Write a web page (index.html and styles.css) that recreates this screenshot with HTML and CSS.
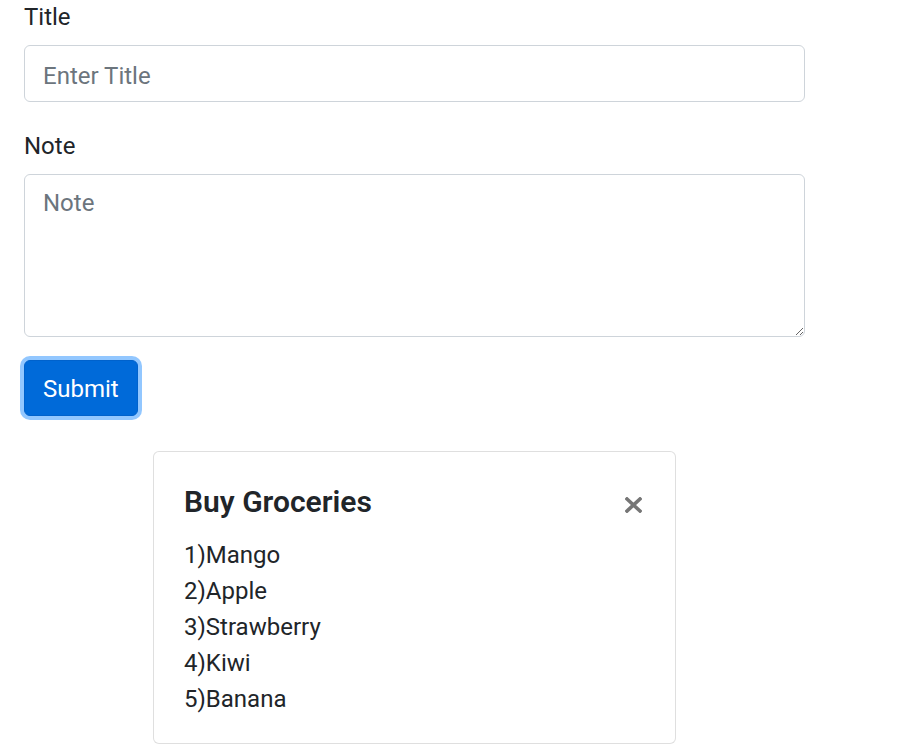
FILE: index.html
```html
<!DOCTYPE html>
<html lang="en">
<head>
<meta charset="utf-8">
<title>Notes</title>
<link rel="stylesheet" href="styles.css">
</head>
<body>
<div class="page">
  <form class="note-form">
    <div class="form-group">
      <label for="title">Title</label>
      <input id="title" class="form-control input" type="text" placeholder="Enter Title">
    </div>
    <div class="form-group form-group-note">
      <label for="note">Note</label>
      <textarea id="note" class="form-control textarea" placeholder="Note"></textarea>
    </div>
    <button type="button" class="btn btn-primary">Submit</button>
  </form>
  <div class="card">
    <div class="card-body">
      <div class="card-head">
        <h5 class="card-title">Buy Groceries</h5>
        <button type="button" class="close" aria-label="Close">
          <svg width="17" height="16" viewBox="0 0 17 16"><path d="M2 2 L15 14 M15 2 L2 14" stroke="#767676" stroke-width="3.6" stroke-linecap="square" fill="none"/></svg>
        </button>
      </div>
      <p class="card-text">1)Mango<br>2)Apple<br>3)Strawberry<br>4)Kiwi<br>5)Banana</p>
    </div>
  </div>
</div>
</body>
</html>
```

FILE: styles.css
```css
html, body {
  margin: 0;
  padding: 0;
  background: #fff;
}

body {
  font-family: "Segoe UI", Roboto, "Liberation Sans", sans-serif;
  font-size: 24px;
  line-height: 1.5;
  color: #212529;
}

.page {
  width: 781px;
  padding: 0 24px;
}

.note-form {
  margin-top: -3px;
}

.form-group {
  margin-bottom: 24px;
}

.form-group-note {
  margin-bottom: 23px;
}

label {
  display: block;
  line-height: 36px;
  padding-top: 2px;
  margin-bottom: 10px;
}

.form-control {
  display: block;
  width: 100%;
  box-sizing: border-box;
  padding: 11px 18px 7px;
  font-family: inherit;
  font-size: 24px;
  line-height: 36px;
  color: #495057;
  background: #fff;
  border: 1px solid #ced4da;
  border-radius: 6px;
  outline: none;
  margin: 0;
}

.form-control::placeholder {
  color: #6c757d;
  opacity: 1;
}

.input {
  height: 57px;
}

.textarea {
  height: 163px;
  resize: vertical;
  padding-top: 10px;
}

.btn {
  display: inline-block;
  font-family: inherit;
  font-size: 24px;
  line-height: 36px;
  padding: 10px 18px 8px;
  border-radius: 6px;
  cursor: pointer;
}

.btn-primary {
  color: #fff;
  background: #006ad9;
  border: 1px solid #0062cc;
  box-shadow: 0 0 0 4px rgba(38, 143, 255, 0.5);
}

.card {
  width: 523px;
  box-sizing: border-box;
  margin: 35px auto 0;
  border: 1px solid rgba(0, 0, 0, 0.125);
  border-radius: 6px;
  background: #fff;
}

.card-body {
  padding: 30px 30px 26px;
}

.card-head {
  display: flex;
  justify-content: space-between;
  align-items: center;
  margin-bottom: 17px;
}

.card-title {
  margin: 0;
  padding-top: 2px;
  font-size: 30px;
  font-weight: 600;
  line-height: 36px;
  color: #212529;
}

.close {
  display: flex;
  padding: 0;
  margin: 7px 3px 0 0;
  border: 0;
  background: transparent;
  cursor: pointer;
}

.card-text {
  margin: 0;
  line-height: 36px;
}
```
